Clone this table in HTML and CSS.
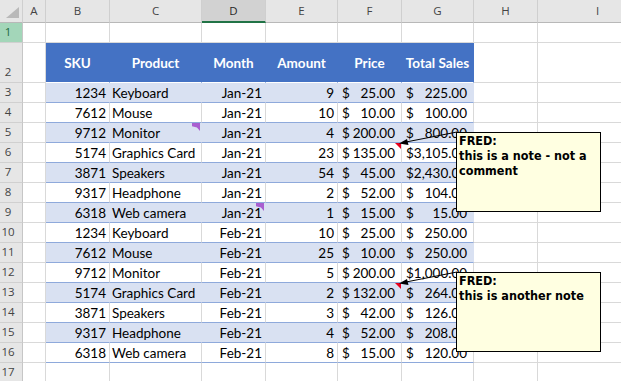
FILE: index.html
```html
<!DOCTYPE html>
<html>
<head>
<meta charset="utf-8">
<link rel="stylesheet" href="styles.css">
</head>
<body>
<div class="sheet">
  <div class="row colhdr">
    <div class="c ch corner"><span class="tri"></span></div>
    <div class="c ch">A</div>
    <div class="c ch">B</div>
    <div class="c ch">C</div>
    <div class="c ch sel">D</div>
    <div class="c ch">E</div>
    <div class="c ch">F</div>
    <div class="c ch">G</div>
    <div class="c ch">H</div>
    <div class="c ch">I</div>
  </div>
  <div class="row">
    <div class="c rh rsel">1</div>
    <div class="c"></div><div class="c"></div><div class="c"></div><div class="c"></div><div class="c"></div><div class="c"></div><div class="c"></div><div class="c"></div><div class="c"></div>
  </div>
  <div class="row tall">
    <div class="c rh">2</div>
    <div class="c"></div>
    <div class="c th">SKU</div>
    <div class="c th">Product</div>
    <div class="c th">Month</div>
    <div class="c th">Amount</div>
    <div class="c th">Price</div>
    <div class="c th">Total Sales</div>
    <div class="c"></div><div class="c"></div>
  </div>

  <div class="row band">
    <div class="c rh">3</div><div class="c"></div>
    <div class="c t r">1234</div><div class="c t">Keyboard</div><div class="c t r">Jan-21</div><div class="c t r">9</div>
    <div class="c t acct"><span>$</span><span>25.00</span></div>
    <div class="c t acct"><span>$</span><span>225.00</span></div>
    <div class="c"></div><div class="c"></div>
  </div>
  <div class="row">
    <div class="c rh">4</div><div class="c"></div>
    <div class="c t r">7612</div><div class="c t">Mouse</div><div class="c t r">Jan-21</div><div class="c t r">10</div>
    <div class="c t acct"><span>$</span><span>10.00</span></div>
    <div class="c t acct"><span>$</span><span>100.00</span></div>
    <div class="c"></div><div class="c"></div>
  </div>
  <div class="row band">
    <div class="c rh">5</div><div class="c"></div>
    <div class="c t r">9712</div><div class="c t">Monitor<span class="cmt"></span></div><div class="c t r">Jan-21</div><div class="c t r">4</div>
    <div class="c t acct"><span>$</span><span>200.00</span></div>
    <div class="c t acct"><span>$</span><span>800.00</span></div>
    <div class="c"></div><div class="c"></div>
  </div>
  <div class="row">
    <div class="c rh">6</div><div class="c"></div>
    <div class="c t r">5174</div><div class="c t">Graphics Card</div><div class="c t r">Jan-21</div><div class="c t r">23</div>
    <div class="c t acct"><span>$</span><span>135.00</span><span class="ind"></span></div>
    <div class="c t acct"><span>$</span><span>3,105.00</span></div>
    <div class="c"></div><div class="c"></div>
  </div>
  <div class="row band">
    <div class="c rh">7</div><div class="c"></div>
    <div class="c t r">3871</div><div class="c t">Speakers</div><div class="c t r">Jan-21</div><div class="c t r">54</div>
    <div class="c t acct"><span>$</span><span>45.00</span></div>
    <div class="c t acct"><span>$</span><span>2,430.00</span></div>
    <div class="c"></div><div class="c"></div>
  </div>
  <div class="row">
    <div class="c rh">8</div><div class="c"></div>
    <div class="c t r">9317</div><div class="c t">Headphone</div><div class="c t r">Jan-21</div><div class="c t r">2</div>
    <div class="c t acct"><span>$</span><span>52.00</span></div>
    <div class="c t acct"><span>$</span><span>104.00</span></div>
    <div class="c"></div><div class="c"></div>
  </div>
  <div class="row band">
    <div class="c rh">9</div><div class="c"></div>
    <div class="c t r">6318</div><div class="c t">Web camera</div><div class="c t r">Jan-21<span class="cmt"></span></div><div class="c t r">1</div>
    <div class="c t acct"><span>$</span><span>15.00</span></div>
    <div class="c t acct"><span>$</span><span>15.00</span></div>
    <div class="c"></div><div class="c"></div>
  </div>
  <div class="row">
    <div class="c rh">10</div><div class="c"></div>
    <div class="c t r">1234</div><div class="c t">Keyboard</div><div class="c t r">Feb-21</div><div class="c t r">10</div>
    <div class="c t acct"><span>$</span><span>25.00</span></div>
    <div class="c t acct"><span>$</span><span>250.00</span></div>
    <div class="c"></div><div class="c"></div>
  </div>
  <div class="row band">
    <div class="c rh">11</div><div class="c"></div>
    <div class="c t r">7612</div><div class="c t">Mouse</div><div class="c t r">Feb-21</div><div class="c t r">25</div>
    <div class="c t acct"><span>$</span><span>10.00</span></div>
    <div class="c t acct"><span>$</span><span>250.00</span></div>
    <div class="c"></div><div class="c"></div>
  </div>
  <div class="row">
    <div class="c rh">12</div><div class="c"></div>
    <div class="c t r">9712</div><div class="c t">Monitor</div><div class="c t r">Feb-21</div><div class="c t r">5</div>
    <div class="c t acct"><span>$</span><span>200.00</span></div>
    <div class="c t acct"><span>$</span><span>1,000.00</span></div>
    <div class="c"></div><div class="c"></div>
  </div>
  <div class="row band">
    <div class="c rh">13</div><div class="c"></div>
    <div class="c t r">5174</div><div class="c t">Graphics Card</div><div class="c t r">Feb-21</div><div class="c t r">2</div>
    <div class="c t acct"><span>$</span><span>132.00</span><span class="ind"></span></div>
    <div class="c t acct"><span>$</span><span>264.00</span></div>
    <div class="c"></div><div class="c"></div>
  </div>
  <div class="row">
    <div class="c rh">14</div><div class="c"></div>
    <div class="c t r">3871</div><div class="c t">Speakers</div><div class="c t r">Feb-21</div><div class="c t r">3</div>
    <div class="c t acct"><span>$</span><span>42.00</span></div>
    <div class="c t acct"><span>$</span><span>126.00</span></div>
    <div class="c"></div><div class="c"></div>
  </div>
  <div class="row band">
    <div class="c rh">15</div><div class="c"></div>
    <div class="c t r">9317</div><div class="c t">Headphone</div><div class="c t r">Feb-21</div><div class="c t r">4</div>
    <div class="c t acct"><span>$</span><span>52.00</span></div>
    <div class="c t acct"><span>$</span><span>208.00</span></div>
    <div class="c"></div><div class="c"></div>
  </div>
  <div class="row">
    <div class="c rh">16</div><div class="c"></div>
    <div class="c t r">6318</div><div class="c t">Web camera</div><div class="c t r">Feb-21</div><div class="c t r">8</div>
    <div class="c t acct"><span>$</span><span>15.00</span></div>
    <div class="c t acct"><span>$</span><span>120.00</span></div>
    <div class="c"></div><div class="c"></div>
  </div>
  <div class="row">
    <div class="c rh">17</div>
    <div class="c"></div><div class="c"></div><div class="c"></div><div class="c"></div><div class="c"></div><div class="c"></div><div class="c"></div><div class="c"></div><div class="c"></div>
  </div>

  <svg class="arrows" width="621" height="381" viewBox="0 0 621 381">
    <line x1="457" y1="132" x2="405" y2="142.2" stroke="#000" stroke-width="1"/>
    <polygon points="399,143.5 407,139 408.5,145" fill="#000"/>
    <line x1="457" y1="272" x2="405" y2="282.2" stroke="#000" stroke-width="1"/>
    <polygon points="399,283.5 407,279 408.5,285" fill="#000"/>
  </svg>

  <div class="note note1"><b>FRED:</b><br>this is a note - not a comment</div>
  <div class="note note2"><b>FRED:</b><br>this is another note</div>
</div>
</body>
</html>
```

FILE: styles.css
```css
html, body {
  margin: 0;
  padding: 0;
  background: #ffffff;
}

.sheet {
  position: relative;
  width: 621px;
  height: 381px;
  overflow: hidden;
  font-family: Lato, "Liberation Sans", sans-serif;
  color: #000;
}

.row {
  display: grid;
  grid-template-columns: 23px 23px 64px 92px 64px 72px 64px 72px 64px 120px;
  height: 20px;
}

.row.tall {
  height: 40px;
}

.row.colhdr {
  height: 23px;
}

.c {
  box-sizing: border-box;
  border-right: 1px solid #d9d9d9;
  border-bottom: 1px solid #d9d9d9;
  display: flex;
  align-items: flex-end;
  font-size: 13.5px;
  line-height: 18px;
  white-space: nowrap;
  overflow: hidden;
  position: relative;
  padding: 0 3px 0 2px;
}

/* column headers */
.ch {
  background: #e6e6e6;
  border-right-color: #cfcfcf;
  border-bottom-color: #b8b8b8;
  justify-content: center;
  align-items: center;
  font-family: "Open Sans", "DejaVu Sans", sans-serif;
  font-size: 11.5px;
  color: #444444;
  padding: 0;
}

.ch.sel {
  background: #d2d2d2;
  color: #262626;
  border-bottom: 2px solid #217346;
}

.corner .tri {
  position: absolute;
  right: 3px;
  bottom: 4px;
  width: 13px;
  height: 11px;
  background: #b9b9b9;
  clip-path: polygon(100% 0, 100% 100%, 0 100%);
}

/* row headers */
.rh {
  background: #e6e6e6;
  border-right-color: #c6c6c6;
  border-bottom-color: #d0d0d0;
  justify-content: center;
  font-family: "Open Sans", "DejaVu Sans", sans-serif;
  font-size: 11.5px;
  color: #444444;
  padding: 0 6px 2px 0;
  line-height: 16px;
}

.rh.rsel {
  background: #a3d6b9;
  color: #1e6b3f;
}

/* table header */
.th {
  background: #4472c4;
  border-right-color: #4472c4;
  border-bottom-color: #ffffff;
  color: #ffffff;
  font-weight: bold;
  justify-content: center;
  align-items: center;
  padding: 0;
}

/* table body */
.t {
  border-bottom-color: #8ea9db;
}

.band .t {
  background: #d9e1f2;
  border-right-color: #d9e1f2;
}

.r {
  justify-content: flex-end;
  padding-right: 3px;
}

.acct {
  justify-content: space-between;
  padding: 0 6px 0 4px;
}

/* indicators */
.cmt {
  position: absolute;
  top: 0;
  right: 1px;
  width: 8px;
  height: 8px;
  background: #a95fd0;
  clip-path: polygon(0 0, 100% 0, 100% 100%, 62% 55%, 0 40%);
}

.ind {
  position: absolute;
  top: 0;
  right: 0;
  width: 6px;
  height: 6px;
  background: #e8001c;
  clip-path: polygon(0 0, 100% 0, 100% 100%);
}

/* overlays */
.arrows {
  position: absolute;
  left: 0;
  top: 0;
  pointer-events: none;
}

.note {
  position: absolute;
  left: 456px;
  width: 145px;
  height: 80px;
  box-sizing: border-box;
  border: 1px solid #000000;
  background: #ffffe1;
  font-family: "DejaVu Sans Condensed", "DejaVu Sans", sans-serif;
  font-stretch: condensed;
  font-weight: bold;
  font-size: 12.5px;
  line-height: 15px;
  padding: 0 2px;
  color: #000;
}

.note b {
  font-weight: bold;
}

.note1 {
  top: 132px;
}

.note2 {
  top: 272px;
}
```
